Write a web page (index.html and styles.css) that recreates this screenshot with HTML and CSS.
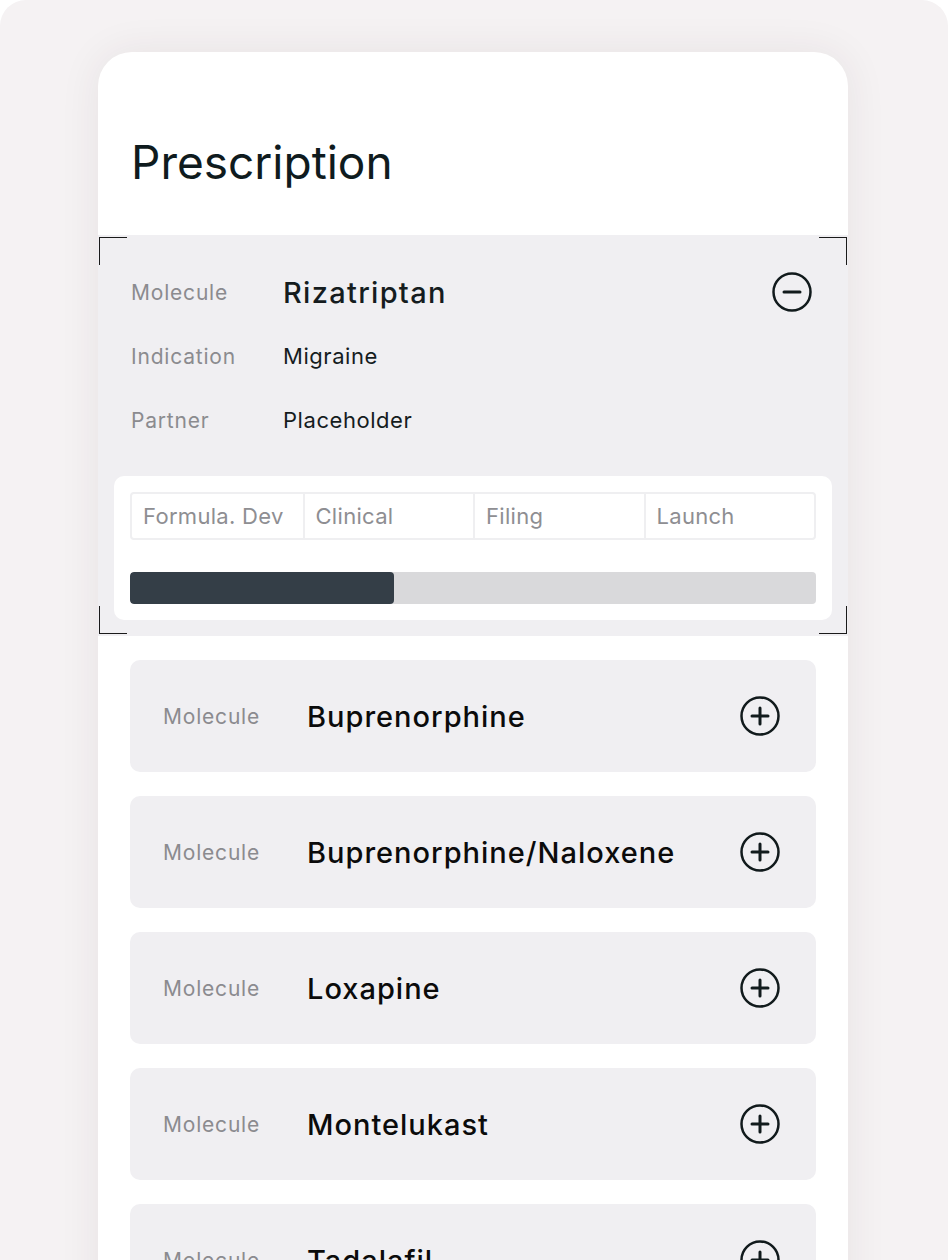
FILE: index.html
```html
<!DOCTYPE html>
<html lang="en">
<head>
    <meta charset="UTF-8">
    <meta name="viewport" content="width=device-width, initial-scale=1.0">
    <title>Prescription</title>
    <link rel="stylesheet" href="styles.css">
</head>
<body>

<div class="frame">
    <div class="card">
        <h1 class="title">Prescription</h1>

        <!-- Expanded molecule -->
        <div class="expanded">
            <span class="corner tl"></span>
            <span class="corner tr"></span>
            <span class="corner bl"></span>
            <span class="corner br"></span>

            <div class="detail-row">
                <span class="label">Molecule</span>
                <span class="value main">Rizatriptan</span>
                <svg class="toggle" width="42" height="42" viewBox="0 0 42 42">
                    <circle cx="21" cy="21" r="18.5" fill="none" stroke="#111a1c" stroke-width="2.5"/>
                    <line x1="13" y1="21" x2="29" y2="21" stroke="#111a1c" stroke-width="3" stroke-linecap="round"/>
                </svg>
            </div>
            <div class="detail-row">
                <span class="label">Indication</span>
                <span class="value">Migraine</span>
            </div>
            <div class="detail-row">
                <span class="label">Partner</span>
                <span class="value">Placeholder</span>
            </div>

            <div class="stage-panel">
                <div class="stages">
                    <div class="stage">Formula. Dev</div>
                    <div class="stage">Clinical</div>
                    <div class="stage">Filing</div>
                    <div class="stage">Launch</div>
                </div>
                <div class="progress">
                    <div class="progress-fill" style="width: 38.5%;"></div>
                </div>
            </div>
        </div>

        <!-- Collapsed molecules -->
        <div class="list">
            <div class="item">
                <span class="label">Molecule</span>
                <span class="value main">Buprenorphine</span>
                <svg class="toggle" width="42" height="42" viewBox="0 0 42 42">
                    <circle cx="21" cy="21" r="18.5" fill="none" stroke="#111a1c" stroke-width="2.5"/>
                    <path d="M13 21h16M21 13v16" stroke="#111a1c" stroke-width="3" stroke-linecap="round"/>
                </svg>
            </div>
            <div class="item">
                <span class="label">Molecule</span>
                <span class="value main">Buprenorphine/Naloxene</span>
                <svg class="toggle" width="42" height="42" viewBox="0 0 42 42">
                    <circle cx="21" cy="21" r="18.5" fill="none" stroke="#111a1c" stroke-width="2.5"/>
                    <path d="M13 21h16M21 13v16" stroke="#111a1c" stroke-width="3" stroke-linecap="round"/>
                </svg>
            </div>
            <div class="item">
                <span class="label">Molecule</span>
                <span class="value main">Loxapine</span>
                <svg class="toggle" width="42" height="42" viewBox="0 0 42 42">
                    <circle cx="21" cy="21" r="18.5" fill="none" stroke="#111a1c" stroke-width="2.5"/>
                    <path d="M13 21h16M21 13v16" stroke="#111a1c" stroke-width="3" stroke-linecap="round"/>
                </svg>
            </div>
            <div class="item">
                <span class="label">Molecule</span>
                <span class="value main">Montelukast</span>
                <svg class="toggle" width="42" height="42" viewBox="0 0 42 42">
                    <circle cx="21" cy="21" r="18.5" fill="none" stroke="#111a1c" stroke-width="2.5"/>
                    <path d="M13 21h16M21 13v16" stroke="#111a1c" stroke-width="3" stroke-linecap="round"/>
                </svg>
            </div>
            <div class="item">
                <span class="label">Molecule</span>
                <span class="value main">Tadalafil</span>
                <svg class="toggle" width="42" height="42" viewBox="0 0 42 42">
                    <circle cx="21" cy="21" r="18.5" fill="none" stroke="#111a1c" stroke-width="2.5"/>
                    <path d="M13 21h16M21 13v16" stroke="#111a1c" stroke-width="3" stroke-linecap="round"/>
                </svg>
            </div>
        </div>
    </div>
</div>

</body>
</html>
```

FILE: styles.css
```css
body {
    margin: 0;
    background: #ffffff;
    font-family: Inter, "Noto Sans", Arial, sans-serif;
    overflow: hidden;
}
.frame {
    height: 1260px;
    padding: 52px 0 0 98px;
    box-sizing: border-box;
    background: #f5f2f3;
    border-radius: 26px 26px 0 0;
    overflow: hidden;
}
.card {
    width: 750px;
    min-height: 1400px;
    background: #ffffff;
    border-radius: 34px 34px 0 0;
    box-shadow: 0 0 40px rgba(60, 40, 50, 0.08);
}
.title {
    margin: 0;
    padding: 82px 33px 0;
    height: 101px;
    font-size: 46px;
    line-height: 56px;
    font-weight: 400;
    color: #0f1b1e;
}
.expanded {
    position: relative;
    background: #f0eff2;
    padding: 25px 0 16px;
}
.corner {
    position: absolute;
    width: 27px;
    height: 27px;
    border: 0 solid #1a1a1a;
}
.corner.tl { top: 2px; left: 1px; border-top-width: 1px; border-left-width: 1px; }
.corner.tr { top: 2px; right: 1px; border-top-width: 1px; border-right-width: 1px; }
.corner.bl { bottom: 2px; left: 1px; border-bottom-width: 1px; border-left-width: 1px; }
.corner.br { bottom: 2px; right: 1px; border-bottom-width: 1px; border-right-width: 1px; }
.detail-row {
    display: flex;
    align-items: center;
    height: 64px;
    padding: 0 35px 0 33px;
}
.label {
    width: 152px;
    flex-shrink: 0;
    font-size: 21px;
    letter-spacing: 0.8px;
    color: #8b8b8f;
}
.value {
    flex: 1;
    font-size: 22px;
    letter-spacing: 0.55px;
    color: #151c1e;
}
.value.main {
    font-size: 29px;
    font-weight: 500;
    letter-spacing: 1.3px;
}
.toggle {
    flex-shrink: 0;
}
.stage-panel {
    margin: 24px 16px 0;
    padding: 16px;
    background: #ffffff;
    border-radius: 10px;
}
.stages {
    display: grid;
    grid-template-columns: repeat(4, 1fr);
    border: 2px solid #efeff1;
    border-radius: 4px;
}
.stage {
    height: 44px;
    line-height: 44px;
    padding-left: 11px;
    font-size: 22px;
    letter-spacing: 0.3px;
    color: #8e8e92;
    border-left: 2px solid #efeff1;
    white-space: nowrap;
}
.stage:first-child {
    border-left: none;
}
.progress {
    margin-top: 32px;
    height: 32px;
    background: #d9d9db;
    border-radius: 4px;
    overflow: hidden;
}
.progress-fill {
    height: 100%;
    background: #343e47;
    border-radius: 4px;
}
.list {
    display: flex;
    flex-direction: column;
    gap: 24px;
    padding: 24px 32px 0;
}
.item {
    display: flex;
    align-items: center;
    height: 112px;
    padding: 0 35px 0 33px;
    background: #f0eff2;
    border-radius: 10px;
}
.item .label {
    width: 144px;
}
.item .value.main {
    font-size: 29px;
    letter-spacing: 1px;
    color: #0b0b0b;
}
```
